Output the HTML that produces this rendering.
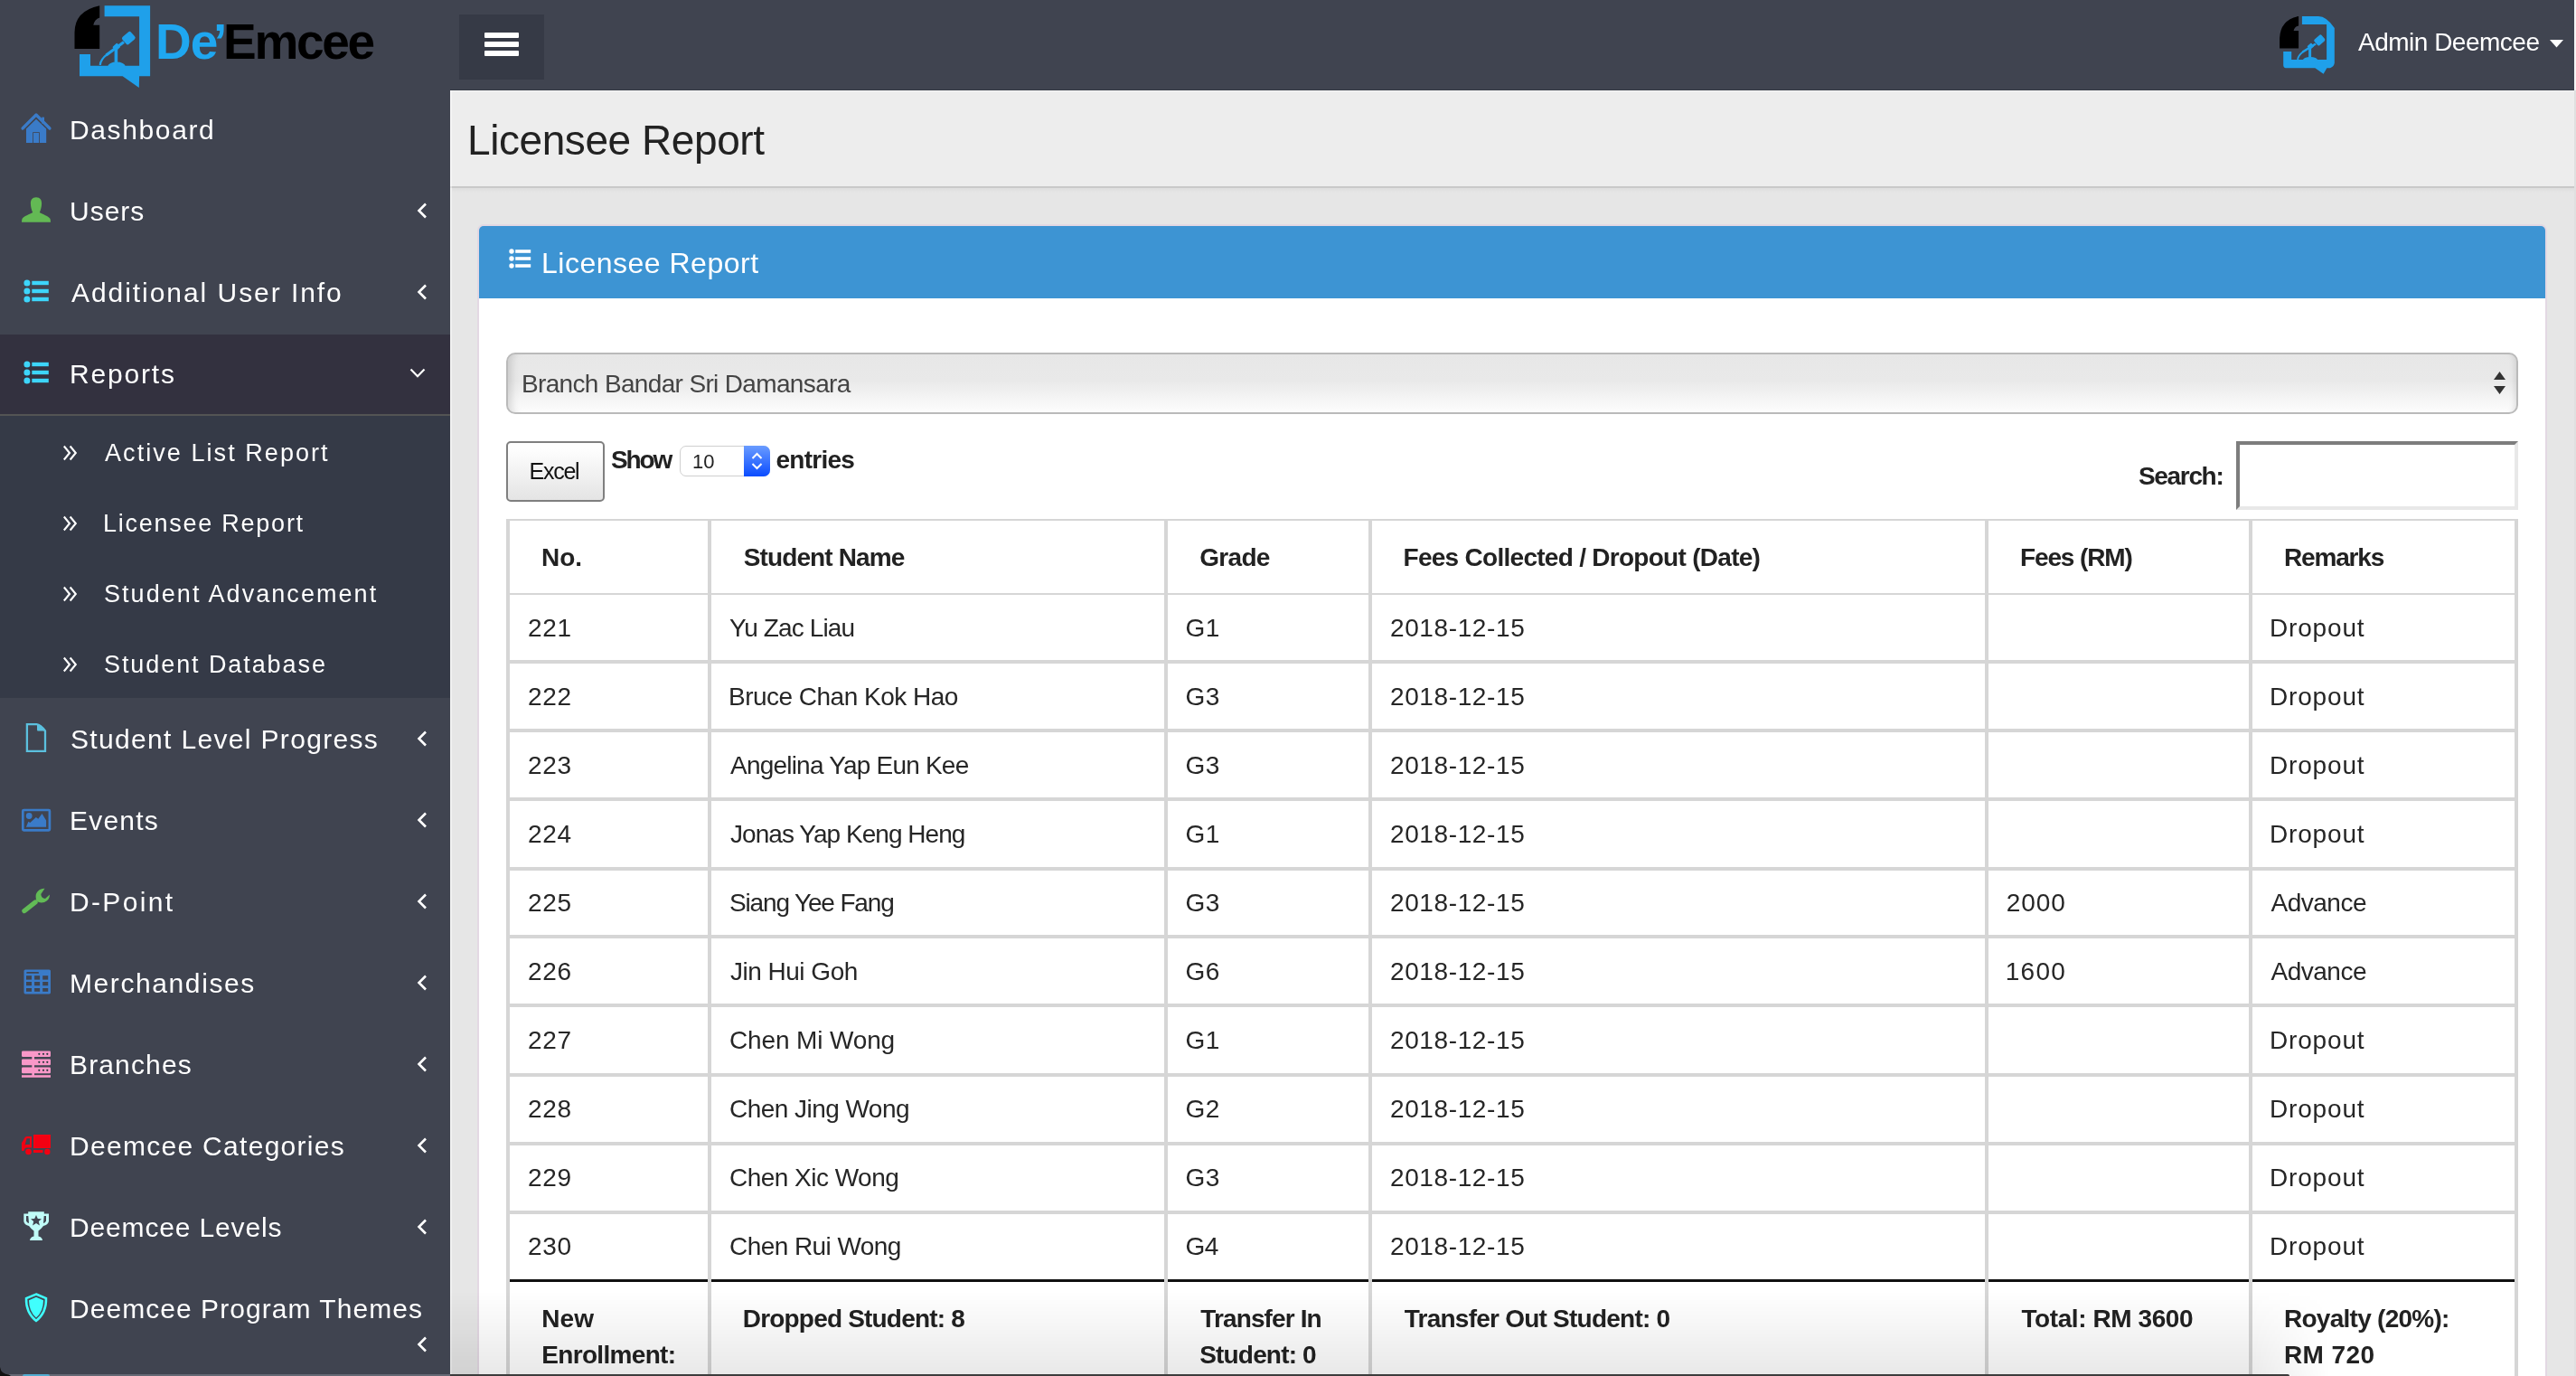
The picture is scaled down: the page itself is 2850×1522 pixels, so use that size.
<!DOCTYPE html>
<html><head><meta charset="utf-8"><title>Licensee Report</title>
<style>
html,body{margin:0;padding:0;}
body{width:2850px;height:1522px;overflow:hidden;position:relative;background:#e6e6e6;font-family:"Liberation Sans", sans-serif;}
</style></head><body><div style="position:absolute;left:0;top:0;width:2850px;height:1522px;overflow:hidden;background:#e6e6e6;will-change:transform">
<div style="position:absolute;left:0px;top:0px;width:2848px;height:100px;background:#404450;"></div><div style="position:absolute;left:2848px;top:0px;width:2px;height:100px;background:#f5f5f5;"></div><div style="position:absolute;left:498px;top:99px;width:2350px;height:1px;background:#363a46;"></div><div style="position:absolute;left:0px;top:100px;width:498px;height:1422px;background:#404450;"></div><div style="position:absolute;left:0px;top:370px;width:498px;height:88px;background:#33313f;"></div><div style="position:absolute;left:0px;top:458px;width:498px;height:2px;background:#545454;"></div><div style="position:absolute;left:0px;top:460px;width:498px;height:312px;background:#353a47;"></div><div style="position:absolute;left:508px;top:16px;width:94px;height:72px;background:#363a46;"></div><div style="position:absolute;left:536px;top:36px;width:38px;height:6px;background:#ffffff;border-radius:1px"></div><div style="position:absolute;left:536px;top:46px;width:38px;height:6px;background:#ffffff;border-radius:1px"></div><div style="position:absolute;left:536px;top:56px;width:38px;height:6px;background:#ffffff;border-radius:1px"></div><svg style="position:absolute;left:76px;top:0px" width="100" height="100" viewBox="76 0 100 100">
<path d="M82.5 54.1 V36 Q82.5 12 110.2 6.2 V19.5 Q104.5 21.5 103.3 27.8 H110.2 V54.1 Z" fill="#000"/>
<g fill="#1fa0ea">
<path d="M115.6 6.2 H166.1 V84.3 H154.1 L153.8 97 L135.6 84.3 H88 V60 H100 V72.7 H154.1 V18.2 H115.6 Z"/>
<g transform="rotate(-41 142.3 42.1)"><rect x="136" y="36.8" width="12.6" height="10.6" rx="2.2"/></g>
<g transform="rotate(-41 128.8 52)"><rect x="125.3" y="49" width="7" height="6" rx="1"/></g>
<rect x="126.6" y="53" width="3.6" height="17"/>
<ellipse cx="129" cy="73" rx="9.6" ry="4.4"/>
</g>
<path d="M137 46.5 L117.5 61" stroke="#1fa0ea" stroke-width="3.2"/>
<path d="M118.5 60.2 Q111 66 110.8 72" stroke="#1fa0ea" stroke-width="2.2" fill="none"/>
</svg><div style="position:absolute;left:172px;top:46px;height:0;line-height:0;white-space:nowrap;font-size:55px;font-weight:700;color:#1fa7f0;letter-spacing:-1px;">De</div><div style="position:absolute;left:236px;top:46px;height:0;line-height:0;white-space:nowrap;font-size:55px;font-weight:700;color:#1fa7f0;letter-spacing:0px;">&#8217;</div><div style="position:absolute;left:247px;top:46px;height:0;line-height:0;white-space:nowrap;font-size:55px;font-weight:700;color:#000;letter-spacing:-2.3px;">Emcee</div><svg style="position:absolute;left:2515px;top:12px" width="75" height="75" viewBox="0 0 75 75">
<path d="M7.1 41.4 V30 Q8 10 28.1 6 V16.5 Q23.5 17.5 22.6 22 H28.1 V41.4 Z" fill="#000"/>
<g fill="#1fa0ea">
<path d="M31.9 6 H50 Q59 6 67.8 19 V57.8 Q67 62 63 63.2 H59.4 L55.6 69.8 L46.3 63.2 H14 Q11.2 63 11.2 60 V45 H20.2 V54 H59.1 V15 H31.9 Z"/>
<g transform="rotate(-41 51 32.5)"><rect x="46" y="28.3" width="10.5" height="8.6" rx="1.8"/></g>
<g transform="rotate(-41 41.4 39.2)"><rect x="38.4" y="36.7" width="6" height="5" rx="0.8"/></g>
<rect x="39.1" y="40" width="3" height="12.5"/>
<ellipse cx="41" cy="54.5" rx="8.2" ry="3.6"/>
</g>
<path d="M47 36.5 L32.5 45.5" stroke="#1fa0ea" stroke-width="2.6"/>
<path d="M33 45.2 Q27 50 27.2 54" stroke="#1fa0ea" stroke-width="1.8" fill="none"/>
</svg><div style="position:absolute;left:2609px;top:47px;height:0;line-height:0;white-space:nowrap;font-size:28px;font-weight:400;color:#ffffff;letter-spacing:-0.500px;">Admin Deemcee</div><svg style="position:absolute;left:2821px;top:44px" width="16" height="9"><path d="M0 0 H15 L7.5 8.5 Z" fill="#fff"/></svg><div style="position:absolute;left:77px;top:144px;height:0;line-height:0;white-space:nowrap;font-size:30px;font-weight:400;color:#ffffff;letter-spacing:1.625px;">Dashboard</div><div style="position:absolute;left:77px;top:234px;height:0;line-height:0;white-space:nowrap;font-size:30px;font-weight:400;color:#ffffff;letter-spacing:1.000px;">Users</div><div style="position:absolute;left:79px;top:324px;height:0;line-height:0;white-space:nowrap;font-size:30px;font-weight:400;color:#ffffff;letter-spacing:1.947px;">Additional User Info</div><div style="position:absolute;left:77px;top:414px;height:0;line-height:0;white-space:nowrap;font-size:30px;font-weight:400;color:#ffffff;letter-spacing:1.833px;">Reports</div><div style="position:absolute;left:78px;top:818px;height:0;line-height:0;white-space:nowrap;font-size:30px;font-weight:400;color:#ffffff;letter-spacing:1.333px;">Student Level Progress</div><div style="position:absolute;left:77px;top:908px;height:0;line-height:0;white-space:nowrap;font-size:30px;font-weight:400;color:#ffffff;letter-spacing:1.200px;">Events</div><div style="position:absolute;left:77px;top:998px;height:0;line-height:0;white-space:nowrap;font-size:30px;font-weight:400;color:#ffffff;letter-spacing:2.333px;">D-Point</div><div style="position:absolute;left:77px;top:1088px;height:0;line-height:0;white-space:nowrap;font-size:30px;font-weight:400;color:#ffffff;letter-spacing:1.591px;">Merchandises</div><div style="position:absolute;left:77px;top:1178px;height:0;line-height:0;white-space:nowrap;font-size:30px;font-weight:400;color:#ffffff;letter-spacing:1.143px;">Branches</div><div style="position:absolute;left:77px;top:1268px;height:0;line-height:0;white-space:nowrap;font-size:30px;font-weight:400;color:#ffffff;letter-spacing:1.294px;">Deemcee Categories</div><div style="position:absolute;left:77px;top:1358px;height:0;line-height:0;white-space:nowrap;font-size:30px;font-weight:400;color:#ffffff;letter-spacing:0.846px;">Deemcee Levels</div><div style="position:absolute;left:77px;top:1448px;height:0;line-height:0;white-space:nowrap;font-size:30px;font-weight:400;color:#ffffff;letter-spacing:1.048px;">Deemcee Program Themes</div><div style="position:absolute;left:116px;top:501px;height:0;line-height:0;white-space:nowrap;font-size:27px;font-weight:400;color:#ffffff;letter-spacing:2.059px;">Active List Report</div><svg style="position:absolute;left:69px;top:492px" width="18" height="18" viewBox="0 0 18 18"><path d="M1.8 1.5 L8 9 L1.8 16.5 M8.6 1.5 L14.8 9 L8.6 16.5" stroke="#fff" stroke-width="2.1" fill="none"/></svg><div style="position:absolute;left:114px;top:579px;height:0;line-height:0;white-space:nowrap;font-size:27px;font-weight:400;color:#ffffff;letter-spacing:1.750px;">Licensee Report</div><svg style="position:absolute;left:69px;top:570px" width="18" height="18" viewBox="0 0 18 18"><path d="M1.8 1.5 L8 9 L1.8 16.5 M8.6 1.5 L14.8 9 L8.6 16.5" stroke="#fff" stroke-width="2.1" fill="none"/></svg><div style="position:absolute;left:115px;top:657px;height:0;line-height:0;white-space:nowrap;font-size:27px;font-weight:400;color:#ffffff;letter-spacing:2.056px;">Student Advancement</div><svg style="position:absolute;left:69px;top:648px" width="18" height="18" viewBox="0 0 18 18"><path d="M1.8 1.5 L8 9 L1.8 16.5 M8.6 1.5 L14.8 9 L8.6 16.5" stroke="#fff" stroke-width="2.1" fill="none"/></svg><div style="position:absolute;left:115px;top:735px;height:0;line-height:0;white-space:nowrap;font-size:27px;font-weight:400;color:#ffffff;letter-spacing:1.917px;">Student Database</div><svg style="position:absolute;left:69px;top:726px" width="18" height="18" viewBox="0 0 18 18"><path d="M1.8 1.5 L8 9 L1.8 16.5 M8.6 1.5 L14.8 9 L8.6 16.5" stroke="#fff" stroke-width="2.1" fill="none"/></svg><svg style="position:absolute;left:460px;top:224px" width="14" height="18" viewBox="0 0 14 18"><path d="M11 1.5 L3.5 9 L11 16.5" stroke="#fff" stroke-width="2.6" fill="none"/></svg><svg style="position:absolute;left:460px;top:314px" width="14" height="18" viewBox="0 0 14 18"><path d="M11 1.5 L3.5 9 L11 16.5" stroke="#fff" stroke-width="2.6" fill="none"/></svg><svg style="position:absolute;left:460px;top:808px" width="14" height="18" viewBox="0 0 14 18"><path d="M11 1.5 L3.5 9 L11 16.5" stroke="#fff" stroke-width="2.6" fill="none"/></svg><svg style="position:absolute;left:460px;top:898px" width="14" height="18" viewBox="0 0 14 18"><path d="M11 1.5 L3.5 9 L11 16.5" stroke="#fff" stroke-width="2.6" fill="none"/></svg><svg style="position:absolute;left:460px;top:988px" width="14" height="18" viewBox="0 0 14 18"><path d="M11 1.5 L3.5 9 L11 16.5" stroke="#fff" stroke-width="2.6" fill="none"/></svg><svg style="position:absolute;left:460px;top:1078px" width="14" height="18" viewBox="0 0 14 18"><path d="M11 1.5 L3.5 9 L11 16.5" stroke="#fff" stroke-width="2.6" fill="none"/></svg><svg style="position:absolute;left:460px;top:1168px" width="14" height="18" viewBox="0 0 14 18"><path d="M11 1.5 L3.5 9 L11 16.5" stroke="#fff" stroke-width="2.6" fill="none"/></svg><svg style="position:absolute;left:460px;top:1258px" width="14" height="18" viewBox="0 0 14 18"><path d="M11 1.5 L3.5 9 L11 16.5" stroke="#fff" stroke-width="2.6" fill="none"/></svg><svg style="position:absolute;left:460px;top:1348px" width="14" height="18" viewBox="0 0 14 18"><path d="M11 1.5 L3.5 9 L11 16.5" stroke="#fff" stroke-width="2.6" fill="none"/></svg><svg style="position:absolute;left:460px;top:1478px" width="14" height="18" viewBox="0 0 14 18"><path d="M11 1.5 L3.5 9 L11 16.5" stroke="#fff" stroke-width="2.6" fill="none"/></svg><svg style="position:absolute;left:452px;top:404px" width="20" height="16" viewBox="0 0 20 16"><path d="M2.5 4.5 L10 12.2 L17.5 4.5" stroke="#fff" stroke-width="2.2" fill="none"/></svg><svg style="position:absolute;left:22px;top:124px" width="36" height="36" viewBox="22 124 36 36">
<path d="M25 142 L40 127 L55 142" stroke="#3a7bc8" stroke-width="3.2" stroke-linecap="round" stroke-linejoin="round" fill="none"/>
<rect x="46.2" y="129.6" width="2.8" height="7" fill="#3a7bc8"/>
<path d="M29 142.5 L40 131.8 L51.2 142.5 V158 H29 Z" fill="#3a7bc8"/>
<rect x="36.2" y="146.2" width="7.6" height="12" fill="#404450"/>
<rect x="37" y="147" width="6" height="11" fill="#3a7bc8"/>
</svg><svg style="position:absolute;left:22px;top:216px" width="36" height="32" viewBox="22 216 36 32">
<path d="M40 218.3 C35.5 218.3 33.8 221.5 33.9 225 C34 229 35 232.5 36.2 235 C33 237 26 239 24.5 242 Q24 244 24 245.7 H56 Q56 244 55.5 242 C54 239 47 237 43.8 235 C45 232.5 46 229 46.1 225 C46.2 221.5 44.5 218.3 40 218.3 Z" fill="#63b954"/>
</svg><svg style="position:absolute;left:24px;top:307.8px" width="32" height="28" viewBox="0 0 32 28"><circle cx="5.9" cy="5" r="3.5" fill="#3dd5fa"/><rect x="11.3" y="2.8" width="18.5" height="4.4" fill="#3dd5fa"/><circle cx="5.9" cy="14" r="3.5" fill="#3dd5fa"/><rect x="11.3" y="11.8" width="18.5" height="4.4" fill="#3dd5fa"/><circle cx="5.9" cy="23" r="3.5" fill="#3dd5fa"/><rect x="11.3" y="20.8" width="18.5" height="4.4" fill="#3dd5fa"/></svg><svg style="position:absolute;left:24px;top:398px" width="32" height="28" viewBox="0 0 32 28"><circle cx="5.9" cy="5" r="3.5" fill="#3dd5fa"/><rect x="11.3" y="2.8" width="18.5" height="4.4" fill="#3dd5fa"/><circle cx="5.9" cy="14" r="3.5" fill="#3dd5fa"/><rect x="11.3" y="11.8" width="18.5" height="4.4" fill="#3dd5fa"/><circle cx="5.9" cy="23" r="3.5" fill="#3dd5fa"/><rect x="11.3" y="20.8" width="18.5" height="4.4" fill="#3dd5fa"/></svg><svg style="position:absolute;left:26px;top:798px" width="28" height="36" viewBox="26 798 28 36">
<path d="M29.9 801.1 H40.5 Q45 801.5 50 808.5 V830.9 H29.9 Z" stroke="#5bc0de" stroke-width="2.3" fill="none"/>
<path d="M41 801 Q46 802 50.5 808.5 H42 Q41 808.5 41 807 Z" fill="#5bc0de"/>
</svg><svg style="position:absolute;left:22px;top:892px" width="36" height="30" viewBox="22 892 36 30">
<rect x="25.3" y="896" width="29.6" height="22.3" rx="1" stroke="#3a7bc8" stroke-width="2.7" fill="none"/>
<circle cx="32.2" cy="902.5" r="3.4" fill="#3a7bc8"/>
<path d="M28.9 914.7 L31.4 908.7 L33.3 910 L39.8 904 L42.3 905.8 L46.5 900 L51.1 907.6 V914.7 Z" fill="#3a7bc8"/>
</svg><svg style="position:absolute;left:22px;top:978px" width="36" height="34" viewBox="22 978 36 34">
<path d="M27 1007.5 L39 998" stroke="#62bb56" stroke-width="5.4" stroke-linecap="round"/>
<path d="M49.5 982.8 C44 982.5 39.5 987 39.6 991.5 C39.7 994 40 995.5 40.5 996.5 L43 998 C45 998.7 47 998.6 49 998 C53 996.5 55 993.5 55 989.5 L50 994 C47 993.5 45.5 992 45.3 989 Z" fill="#62bb56"/>
</svg><svg style="position:absolute;left:24px;top:1070px" width="34" height="32" viewBox="24 1070 34 32">
<rect x="26.5" y="1072.4" width="29.5" height="27" rx="1.6" fill="#3a7bc8"/>
<rect x="29.2" y="1075" width="13.8" height="1.8" rx="0.9" fill="#404450"/>
<g fill="#404450">
<rect x="29" y="1079.2" width="6" height="4.4"/><rect x="38.1" y="1079.2" width="6" height="4.4"/><rect x="47.2" y="1079.2" width="6" height="4.4"/>
<rect x="29" y="1086" width="6" height="4.2"/><rect x="38.1" y="1086" width="6" height="4.2"/><rect x="47.2" y="1086" width="6" height="4.2"/>
<rect x="29" y="1093" width="6" height="3.8"/><rect x="38.1" y="1093" width="6" height="3.8"/><rect x="47.2" y="1093" width="6" height="3.8"/>
</g></svg><svg style="position:absolute;left:22px;top:1160px" width="36" height="34" viewBox="22 1160 36 34">
<g fill="#f998c8">
<rect x="24" y="1162.4" width="32" height="6.6" rx="1.2"/>
<rect x="24" y="1171.4" width="32" height="6.8" rx="1.2"/>
<rect x="24" y="1180.5" width="32" height="6.7" rx="1.2"/>
<rect x="24" y="1189.2" width="32" height="2.6"/>
<rect x="35.3" y="1168" width="2.7" height="22"/>
</g>
<g fill="#2b3a3f">
<circle cx="43.3" cy="1165.8" r="1.1"/><circle cx="48" cy="1165.8" r="1.1"/><circle cx="52.3" cy="1165.8" r="1.1"/>
<circle cx="43.3" cy="1174.8" r="1.1"/><circle cx="48" cy="1174.8" r="1.1"/><circle cx="52.3" cy="1174.8" r="1.1"/>
<circle cx="43.3" cy="1183.8" r="1.1"/><circle cx="48" cy="1183.8" r="1.1"/><circle cx="52.3" cy="1183.8" r="1.1"/>
</g></svg><svg style="position:absolute;left:22px;top:1252px" width="36" height="28" viewBox="22 1252 36 28">
<g fill="#f30012">
<rect x="37" y="1255" width="19" height="15"/>
<path d="M26 1261 Q27.5 1257 30 1257 H35 V1269.5 H29 Q27 1270 26.5 1273 H24 V1264 Z"/>
<rect x="37" y="1272" width="10.5" height="3"/>
<circle cx="31.5" cy="1274" r="3.3"/><circle cx="52.3" cy="1274" r="3.2"/>
</g>
<path d="M27.5 1266.8 L29.6 1259.3 H33 V1266 H28.5 Z" fill="#404450"/>
</svg><svg style="position:absolute;left:24px;top:1338px" width="32" height="36" viewBox="24 1338 32 36">
<path d="M31.2 1340.2 H48.8 V1342.5 H54 V1351 Q53 1355 48 1356 Q45 1360 42.5 1361.5 V1367.5 Q46.5 1368 47 1372 H33 Q33.5 1368 37.5 1367.5 V1361.5 Q35 1360 32 1356 Q27 1355 26.3 1351 V1342.5 H31.2 Z" fill="#c0fcf8"/>
<path d="M29 1345 V1350.5 Q30 1352.5 32 1353 L31.3 1345 Z M51 1345 V1350.5 Q50 1352.5 48 1353 L48.7 1345 Z" fill="#404450"/>
<path d="M40 1344 L41.8 1348 L46 1348.3 L42.8 1351 L43.9 1355.4 L40 1353 L36.1 1355.4 L37.2 1351 L34 1348.3 L38.2 1348 Z" fill="#404450"/>
</svg><svg style="position:absolute;left:26px;top:1428px" width="28" height="36" viewBox="26 1428 28 36">
<path d="M40 1431.5 L51 1436 Q51.5 1452 40 1461 Q28.5 1452 29 1436 Z" stroke="#40fffd" stroke-width="2.5" fill="none"/>
<path d="M40 1434.8 L48 1438.2 Q48 1450.5 40 1457.5 Q32 1450.5 32 1438.2 Z" fill="#40fffd"/>
</svg><div style="position:absolute;left:498px;top:100px;width:2350px;height:106px;background:#ededed;"></div><div style="position:absolute;left:498px;top:206px;width:2350px;height:2px;background:#c9c9c9;"></div><div style="position:absolute;left:498px;top:100px;width:2350px;height:1px;background:#f6f6f6;"></div><div style="position:absolute;left:2848px;top:100px;width:2px;height:1422px;background:#e0e0e0;"></div><div style="position:absolute;left:498px;top:100px;width:2px;height:1422px;background:rgba(255,255,255,0.45);"></div><div style="position:absolute;left:500px;top:208px;width:2348px;height:5px;background:linear-gradient(rgba(0,0,0,0.035), rgba(0,0,0,0));"></div><div style="position:absolute;left:517px;top:155px;height:0;line-height:0;white-space:nowrap;font-size:46px;font-weight:400;color:#222;letter-spacing:-0.429px;">Licensee Report</div><div style="position:absolute;left:528px;top:248px;width:2290px;height:1274px;background:#e3d8e3;border-radius:7px 7px 0 0"></div><div style="position:absolute;left:530px;top:250px;width:2286px;height:80px;background:#3d94d3;border-radius:5px 5px 0 0"></div><div style="position:absolute;left:530px;top:330px;width:2286px;height:1192px;background:#ffffff;"></div><svg style="position:absolute;left:562px;top:274px" width="28" height="24" viewBox="0 0 28 24"><circle cx="4" cy="4" r="2.7" fill="#fff"/><rect x="8.2" y="2.2" width="17" height="3.6" fill="#fff"/><circle cx="4" cy="12" r="2.7" fill="#fff"/><rect x="8.2" y="10.2" width="17" height="3.6" fill="#fff"/><circle cx="4" cy="20" r="2.7" fill="#fff"/><rect x="8.2" y="18.2" width="17" height="3.6" fill="#fff"/></svg><div style="position:absolute;left:599px;top:291px;height:0;line-height:0;white-space:nowrap;font-size:32px;font-weight:400;color:#ffffff;letter-spacing:0.500px;">Licensee Report</div><div style="position:absolute;left:560px;top:390px;width:2226px;height:68px;background:linear-gradient(#e7e7e7 0%, #e9e9e9 45%, #fdfdfd 100%);box-sizing:border-box;border:2px solid #bababa;border-radius:10px;box-shadow:inset 12px 0 8px -8px rgba(0,0,0,0.13), inset -8px 0 6px -6px rgba(0,0,0,0.10)"></div><div style="position:absolute;left:577px;top:425px;height:0;line-height:0;white-space:nowrap;font-size:28px;font-weight:400;color:#444;letter-spacing:-0.654px;">Branch Bandar Sri Damansara</div><svg style="position:absolute;left:2758px;top:411px" width="15" height="26" viewBox="0 0 15 26"><path d="M7.5 0 L14 9 H1 Z M1 16 H14 L7.5 25 Z" fill="#333"/></svg><div style="position:absolute;left:560px;top:488px;width:109px;height:67px;background:linear-gradient(#fefefe 10%, #e4e4e4);box-sizing:border-box;border:2px solid #7f7f7f;border-radius:5px"></div><div style="position:absolute;left:585.5px;top:521px;height:0;line-height:0;white-space:nowrap;font-size:25px;font-weight:400;color:#111;letter-spacing:-1.250px;">Excel</div><div style="position:absolute;left:676px;top:509px;height:0;line-height:0;white-space:nowrap;font-size:28px;font-weight:700;color:#222;letter-spacing:-2.167px;">Show</div><div style="position:absolute;left:752px;top:493px;width:100px;height:34px;background:#ffffff;box-sizing:border-box;border:1px solid #cfcfcf;border-radius:7px"></div><div style="position:absolute;left:823px;top:493px;width:29px;height:34px;background:linear-gradient(#6a9cff, #0a4cff);border-radius:0 7px 7px 0"></div><svg style="position:absolute;left:830px;top:500px" width="15" height="20" viewBox="0 0 15 20"><path d="M2.5 7 L7.5 2 L12.5 7 M2.5 13 L7.5 18 L12.5 13" stroke="#fff" stroke-width="2" fill="none"/></svg><div style="position:absolute;left:766px;top:511px;height:0;line-height:0;white-space:nowrap;font-size:22px;font-weight:400;color:#222;letter-spacing:0.000px;">10</div><div style="position:absolute;left:858.5px;top:509px;height:0;line-height:0;white-space:nowrap;font-size:28px;font-weight:700;color:#222;letter-spacing:-0.750px;">entries</div><div style="position:absolute;left:2366px;top:527px;height:0;line-height:0;white-space:nowrap;font-size:28px;font-weight:700;color:#222;letter-spacing:-1.333px;">Search:</div><div style="position:absolute;left:2474px;top:488px;width:312px;height:76px;background:#ffffff;box-sizing:border-box;border-style:solid;border-width:4px;border-color:#7d7d7d #e8e8e8 #e8e8e8 #7d7d7d"></div><div style="position:absolute;left:560px;top:574px;width:2226px;height:2px;background:#d6d6d6;"></div><div style="position:absolute;left:560px;top:574px;width:4px;height:948px;background:#d6d6d6;"></div><div style="position:absolute;left:783px;top:574px;width:4px;height:948px;background:#d6d6d6;"></div><div style="position:absolute;left:1288px;top:574px;width:4px;height:948px;background:#d6d6d6;"></div><div style="position:absolute;left:1514px;top:574px;width:4px;height:948px;background:#d6d6d6;"></div><div style="position:absolute;left:2196px;top:574px;width:4px;height:948px;background:#d6d6d6;"></div><div style="position:absolute;left:2488px;top:574px;width:4px;height:948px;background:#d6d6d6;"></div><div style="position:absolute;left:2782px;top:574px;width:4px;height:948px;background:#d6d6d6;"></div><div style="position:absolute;left:560px;top:656px;width:2226px;height:2px;background:#d6d6d6;"></div><div style="position:absolute;left:560px;top:730px;width:2226px;height:4px;background:#d6d6d6;"></div><div style="position:absolute;left:560px;top:806px;width:2226px;height:4px;background:#d6d6d6;"></div><div style="position:absolute;left:560px;top:882px;width:2226px;height:4px;background:#d6d6d6;"></div><div style="position:absolute;left:560px;top:959px;width:2226px;height:4px;background:#d6d6d6;"></div><div style="position:absolute;left:560px;top:1034px;width:2226px;height:4px;background:#d6d6d6;"></div><div style="position:absolute;left:560px;top:1110px;width:2226px;height:4px;background:#d6d6d6;"></div><div style="position:absolute;left:560px;top:1187px;width:2226px;height:4px;background:#d6d6d6;"></div><div style="position:absolute;left:560px;top:1263px;width:2226px;height:4px;background:#d6d6d6;"></div><div style="position:absolute;left:560px;top:1339px;width:2226px;height:4px;background:#d6d6d6;"></div><div style="position:absolute;left:564px;top:1415px;width:219px;height:3px;background:#111;"></div><div style="position:absolute;left:787px;top:1415px;width:501px;height:3px;background:#111;"></div><div style="position:absolute;left:1292px;top:1415px;width:222px;height:3px;background:#111;"></div><div style="position:absolute;left:1518px;top:1415px;width:678px;height:3px;background:#111;"></div><div style="position:absolute;left:2200px;top:1415px;width:288px;height:3px;background:#111;"></div><div style="position:absolute;left:2492px;top:1415px;width:290px;height:3px;background:#111;"></div><div style="position:absolute;left:599px;top:617px;height:0;line-height:0;white-space:nowrap;font-size:28px;font-weight:700;color:#222;letter-spacing:0.000px;">No.</div><div style="position:absolute;left:822.75px;top:617px;height:0;line-height:0;white-space:nowrap;font-size:28px;font-weight:700;color:#222;letter-spacing:-0.886px;">Student Name</div><div style="position:absolute;left:1327.25px;top:617px;height:0;line-height:0;white-space:nowrap;font-size:28px;font-weight:700;color:#222;letter-spacing:-0.688px;">Grade</div><div style="position:absolute;left:1552.5px;top:617px;height:0;line-height:0;white-space:nowrap;font-size:28px;font-weight:700;color:#222;letter-spacing:-0.717px;">Fees Collected / Dropout (Date)</div><div style="position:absolute;left:2235px;top:617px;height:0;line-height:0;white-space:nowrap;font-size:28px;font-weight:700;color:#222;letter-spacing:-1.125px;">Fees (RM)</div><div style="position:absolute;left:2527px;top:617px;height:0;line-height:0;white-space:nowrap;font-size:28px;font-weight:700;color:#222;letter-spacing:-1.167px;">Remarks</div><div style="position:absolute;left:584px;top:695px;height:0;line-height:0;white-space:nowrap;font-size:28px;font-weight:400;color:#262626;letter-spacing:0.625px;">221</div><div style="position:absolute;left:807px;top:695px;height:0;line-height:0;white-space:nowrap;font-size:28px;font-weight:400;color:#262626;letter-spacing:-0.875px;">Yu Zac Liau</div><div style="position:absolute;left:1311.5px;top:695px;height:0;line-height:0;white-space:nowrap;font-size:28px;font-weight:400;color:#262626;letter-spacing:0.500px;">G1</div><div style="position:absolute;left:1538px;top:695px;height:0;line-height:0;white-space:nowrap;font-size:28px;font-weight:400;color:#262626;letter-spacing:0.611px;">2018-12-15</div><div style="position:absolute;left:2511px;top:695px;height:0;line-height:0;white-space:nowrap;font-size:28px;font-weight:400;color:#262626;letter-spacing:0.833px;">Dropout</div><div style="position:absolute;left:584px;top:771px;height:0;line-height:0;white-space:nowrap;font-size:28px;font-weight:400;color:#262626;letter-spacing:0.625px;">222</div><div style="position:absolute;left:806px;top:771px;height:0;line-height:0;white-space:nowrap;font-size:28px;font-weight:400;color:#262626;letter-spacing:-0.515px;">Bruce Chan Kok Hao</div><div style="position:absolute;left:1311.5px;top:771px;height:0;line-height:0;white-space:nowrap;font-size:28px;font-weight:400;color:#262626;letter-spacing:0.500px;">G3</div><div style="position:absolute;left:1538px;top:771px;height:0;line-height:0;white-space:nowrap;font-size:28px;font-weight:400;color:#262626;letter-spacing:0.611px;">2018-12-15</div><div style="position:absolute;left:2511px;top:771px;height:0;line-height:0;white-space:nowrap;font-size:28px;font-weight:400;color:#262626;letter-spacing:0.833px;">Dropout</div><div style="position:absolute;left:584px;top:847px;height:0;line-height:0;white-space:nowrap;font-size:28px;font-weight:400;color:#262626;letter-spacing:0.625px;">223</div><div style="position:absolute;left:808px;top:847px;height:0;line-height:0;white-space:nowrap;font-size:28px;font-weight:400;color:#262626;letter-spacing:-0.789px;">Angelina Yap Eun Kee</div><div style="position:absolute;left:1311.5px;top:847px;height:0;line-height:0;white-space:nowrap;font-size:28px;font-weight:400;color:#262626;letter-spacing:0.500px;">G3</div><div style="position:absolute;left:1538px;top:847px;height:0;line-height:0;white-space:nowrap;font-size:28px;font-weight:400;color:#262626;letter-spacing:0.611px;">2018-12-15</div><div style="position:absolute;left:2511px;top:847px;height:0;line-height:0;white-space:nowrap;font-size:28px;font-weight:400;color:#262626;letter-spacing:0.833px;">Dropout</div><div style="position:absolute;left:584px;top:923px;height:0;line-height:0;white-space:nowrap;font-size:28px;font-weight:400;color:#262626;letter-spacing:0.625px;">224</div><div style="position:absolute;left:808px;top:923px;height:0;line-height:0;white-space:nowrap;font-size:28px;font-weight:400;color:#262626;letter-spacing:-0.958px;">Jonas Yap Keng Heng</div><div style="position:absolute;left:1311.5px;top:923px;height:0;line-height:0;white-space:nowrap;font-size:28px;font-weight:400;color:#262626;letter-spacing:0.500px;">G1</div><div style="position:absolute;left:1538px;top:923px;height:0;line-height:0;white-space:nowrap;font-size:28px;font-weight:400;color:#262626;letter-spacing:0.611px;">2018-12-15</div><div style="position:absolute;left:2511px;top:923px;height:0;line-height:0;white-space:nowrap;font-size:28px;font-weight:400;color:#262626;letter-spacing:0.833px;">Dropout</div><div style="position:absolute;left:584px;top:999px;height:0;line-height:0;white-space:nowrap;font-size:28px;font-weight:400;color:#262626;letter-spacing:0.625px;">225</div><div style="position:absolute;left:807px;top:999px;height:0;line-height:0;white-space:nowrap;font-size:28px;font-weight:400;color:#262626;letter-spacing:-1.154px;">Siang Yee Fang</div><div style="position:absolute;left:1311.5px;top:999px;height:0;line-height:0;white-space:nowrap;font-size:28px;font-weight:400;color:#262626;letter-spacing:0.500px;">G3</div><div style="position:absolute;left:1538px;top:999px;height:0;line-height:0;white-space:nowrap;font-size:28px;font-weight:400;color:#262626;letter-spacing:0.611px;">2018-12-15</div><div style="position:absolute;left:2219.75px;top:999px;height:0;line-height:0;white-space:nowrap;font-size:28px;font-weight:400;color:#262626;letter-spacing:0.917px;">2000</div><div style="position:absolute;left:2512.5px;top:999px;height:0;line-height:0;white-space:nowrap;font-size:28px;font-weight:400;color:#262626;letter-spacing:-0.500px;">Advance</div><div style="position:absolute;left:584px;top:1075px;height:0;line-height:0;white-space:nowrap;font-size:28px;font-weight:400;color:#262626;letter-spacing:0.625px;">226</div><div style="position:absolute;left:808px;top:1075px;height:0;line-height:0;white-space:nowrap;font-size:28px;font-weight:400;color:#262626;letter-spacing:-0.500px;">Jin Hui Goh</div><div style="position:absolute;left:1311.5px;top:1075px;height:0;line-height:0;white-space:nowrap;font-size:28px;font-weight:400;color:#262626;letter-spacing:0.500px;">G6</div><div style="position:absolute;left:1538px;top:1075px;height:0;line-height:0;white-space:nowrap;font-size:28px;font-weight:400;color:#262626;letter-spacing:0.611px;">2018-12-15</div><div style="position:absolute;left:2218.75px;top:1075px;height:0;line-height:0;white-space:nowrap;font-size:28px;font-weight:400;color:#262626;letter-spacing:1.250px;">1600</div><div style="position:absolute;left:2512.5px;top:1075px;height:0;line-height:0;white-space:nowrap;font-size:28px;font-weight:400;color:#262626;letter-spacing:-0.500px;">Advance</div><div style="position:absolute;left:584px;top:1151px;height:0;line-height:0;white-space:nowrap;font-size:28px;font-weight:400;color:#262626;letter-spacing:0.625px;">227</div><div style="position:absolute;left:807px;top:1151px;height:0;line-height:0;white-space:nowrap;font-size:28px;font-weight:400;color:#262626;letter-spacing:-0.136px;">Chen Mi Wong</div><div style="position:absolute;left:1311.5px;top:1151px;height:0;line-height:0;white-space:nowrap;font-size:28px;font-weight:400;color:#262626;letter-spacing:0.500px;">G1</div><div style="position:absolute;left:1538px;top:1151px;height:0;line-height:0;white-space:nowrap;font-size:28px;font-weight:400;color:#262626;letter-spacing:0.611px;">2018-12-15</div><div style="position:absolute;left:2511px;top:1151px;height:0;line-height:0;white-space:nowrap;font-size:28px;font-weight:400;color:#262626;letter-spacing:0.833px;">Dropout</div><div style="position:absolute;left:584px;top:1227px;height:0;line-height:0;white-space:nowrap;font-size:28px;font-weight:400;color:#262626;letter-spacing:0.625px;">228</div><div style="position:absolute;left:807px;top:1227px;height:0;line-height:0;white-space:nowrap;font-size:28px;font-weight:400;color:#262626;letter-spacing:-0.538px;">Chen Jing Wong</div><div style="position:absolute;left:1311.5px;top:1227px;height:0;line-height:0;white-space:nowrap;font-size:28px;font-weight:400;color:#262626;letter-spacing:0.500px;">G2</div><div style="position:absolute;left:1538px;top:1227px;height:0;line-height:0;white-space:nowrap;font-size:28px;font-weight:400;color:#262626;letter-spacing:0.611px;">2018-12-15</div><div style="position:absolute;left:2511px;top:1227px;height:0;line-height:0;white-space:nowrap;font-size:28px;font-weight:400;color:#262626;letter-spacing:0.833px;">Dropout</div><div style="position:absolute;left:584px;top:1303px;height:0;line-height:0;white-space:nowrap;font-size:28px;font-weight:400;color:#262626;letter-spacing:0.625px;">229</div><div style="position:absolute;left:807px;top:1303px;height:0;line-height:0;white-space:nowrap;font-size:28px;font-weight:400;color:#262626;letter-spacing:-0.521px;">Chen Xic Wong</div><div style="position:absolute;left:1311.5px;top:1303px;height:0;line-height:0;white-space:nowrap;font-size:28px;font-weight:400;color:#262626;letter-spacing:0.500px;">G3</div><div style="position:absolute;left:1538px;top:1303px;height:0;line-height:0;white-space:nowrap;font-size:28px;font-weight:400;color:#262626;letter-spacing:0.611px;">2018-12-15</div><div style="position:absolute;left:2511px;top:1303px;height:0;line-height:0;white-space:nowrap;font-size:28px;font-weight:400;color:#262626;letter-spacing:0.833px;">Dropout</div><div style="position:absolute;left:584px;top:1379px;height:0;line-height:0;white-space:nowrap;font-size:28px;font-weight:400;color:#262626;letter-spacing:0.625px;">230</div><div style="position:absolute;left:807px;top:1379px;height:0;line-height:0;white-space:nowrap;font-size:28px;font-weight:400;color:#262626;letter-spacing:-0.562px;">Chen Rui Wong</div><div style="position:absolute;left:1311.5px;top:1379px;height:0;line-height:0;white-space:nowrap;font-size:28px;font-weight:400;color:#262626;letter-spacing:-0.500px;">G4</div><div style="position:absolute;left:1538px;top:1379px;height:0;line-height:0;white-space:nowrap;font-size:28px;font-weight:400;color:#262626;letter-spacing:0.611px;">2018-12-15</div><div style="position:absolute;left:2511px;top:1379px;height:0;line-height:0;white-space:nowrap;font-size:28px;font-weight:400;color:#262626;letter-spacing:0.833px;">Dropout</div><div style="position:absolute;left:599.25px;top:1459px;height:0;line-height:0;white-space:nowrap;font-size:28px;font-weight:700;color:#222;letter-spacing:0.125px;">New</div><div style="position:absolute;left:599.25px;top:1499px;height:0;line-height:0;white-space:nowrap;font-size:28px;font-weight:700;color:#222;letter-spacing:-0.675px;">Enrollment:</div><div style="position:absolute;left:821.75px;top:1459px;height:0;line-height:0;white-space:nowrap;font-size:28px;font-weight:700;color:#222;letter-spacing:-0.809px;">Dropped Student: 8</div><div style="position:absolute;left:1328.25px;top:1459px;height:0;line-height:0;white-space:nowrap;font-size:28px;font-weight:700;color:#222;letter-spacing:-0.875px;">Transfer In</div><div style="position:absolute;left:1327.25px;top:1499px;height:0;line-height:0;white-space:nowrap;font-size:28px;font-weight:700;color:#222;letter-spacing:-0.833px;">Student: 0</div><div style="position:absolute;left:1553.75px;top:1459px;height:0;line-height:0;white-space:nowrap;font-size:28px;font-weight:700;color:#222;letter-spacing:-0.761px;">Transfer Out Student: 0</div><div style="position:absolute;left:2236.5px;top:1459px;height:0;line-height:0;white-space:nowrap;font-size:28px;font-weight:700;color:#222;letter-spacing:-0.423px;">Total: RM 3600</div><div style="position:absolute;left:2527px;top:1459px;height:0;line-height:0;white-space:nowrap;font-size:28px;font-weight:700;color:#222;letter-spacing:-0.731px;">Royalty (20%):</div><div style="position:absolute;left:2527px;top:1499px;height:0;line-height:0;white-space:nowrap;font-size:28px;font-weight:700;color:#222;letter-spacing:0.400px;">RM 720</div><div style="position:absolute;left:498px;top:1428px;width:2080px;height:94px;background:linear-gradient(rgba(0,0,0,0), rgba(0,0,0,0.09));-webkit-mask-image:linear-gradient(to right, #000 0, #000 1990px, transparent 2080px);mask-image:linear-gradient(to right, #000 0, #000 1990px, transparent 2080px)"></div><div style="position:absolute;left:0px;top:1520px;width:498px;height:2px;background:#656975;"></div><div style="position:absolute;left:25px;top:1520px;width:30px;height:2px;background:#52acd0;border-radius:2px 2px 0 0"></div><div style="position:absolute;left:498px;top:1520px;width:2035px;height:2px;background:#3c3c3c;border-radius:0 2px 0 0"></div><svg style="position:absolute;left:0;top:1510px" width="12" height="12" viewBox="0 0 12 12"><path d="M0 2 Q1 10 10 10.5 L12 12 H0 Z" fill="#111"/></svg>
</div></body></html>
